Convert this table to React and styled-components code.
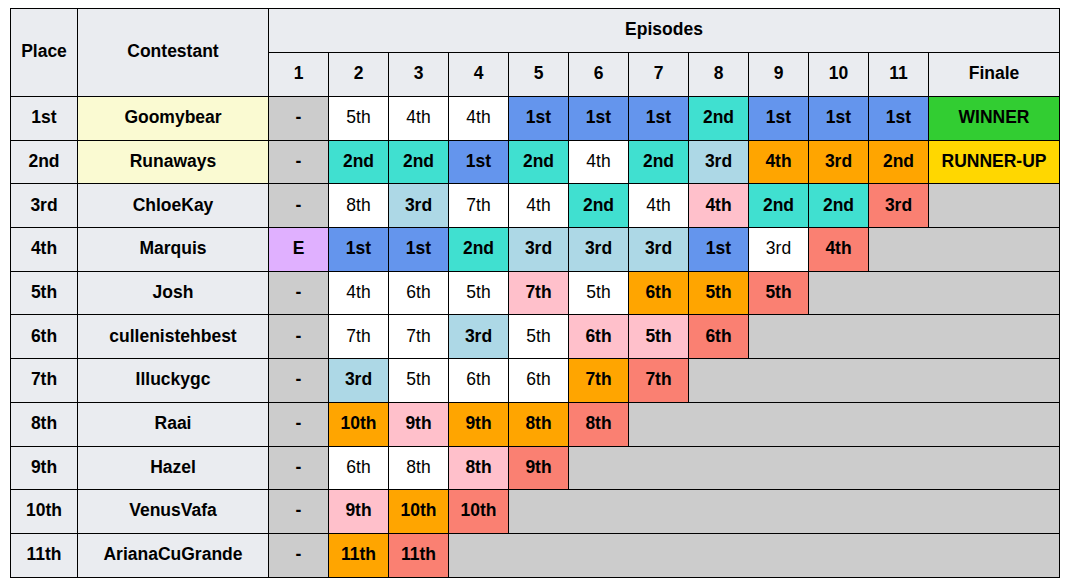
import React from 'react'
import styled, { createGlobalStyle } from 'styled-components'

const GlobalStyle = createGlobalStyle`
  body {
    margin: 0;
    background: #fff;
    font-family: "Liberation Sans", Arial, sans-serif;
  }
`

const COLORS = {
  w: '#ffffff',
  b: '#6495ed',
  t: '#40e0d0',
  l: '#add8e6',
  o: '#ffa500',
  s: '#fa8072',
  p: '#ffc0cb',
  m: '#e0b0ff',
  x: '#cccccc',
}

const rows = [
  { place: '1st', name: 'Goomybear', top: true, ep1: '-', eps: [['5th', 'w'], ['4th', 'w'], ['4th', 'w'], ['1st', 'b'], ['1st', 'b'], ['1st', 'b'], ['2nd', 't'], ['1st', 'b'], ['1st', 'b'], ['1st', 'b']], finale: ['WINNER', '#32cd32'] },
  { place: '2nd', name: 'Runaways', top: true, ep1: '-', eps: [['2nd', 't'], ['2nd', 't'], ['1st', 'b'], ['2nd', 't'], ['4th', 'w'], ['2nd', 't'], ['3rd', 'l'], ['4th', 'o'], ['3rd', 'o'], ['2nd', 'o']], finale: ['RUNNER-UP', '#ffd700'] },
  { place: '3rd', name: 'ChloeKay', ep1: '-', eps: [['8th', 'w'], ['3rd', 'l'], ['7th', 'w'], ['4th', 'w'], ['2nd', 't'], ['4th', 'w'], ['4th', 'p'], ['2nd', 't'], ['2nd', 't'], ['3rd', 's']] },
  { place: '4th', name: 'Marquis', ep1: 'E', eps: [['1st', 'b'], ['1st', 'b'], ['2nd', 't'], ['3rd', 'l'], ['3rd', 'l'], ['3rd', 'l'], ['1st', 'b'], ['3rd', 'w'], ['4th', 's']] },
  { place: '5th', name: 'Josh', ep1: '-', eps: [['4th', 'w'], ['6th', 'w'], ['5th', 'w'], ['7th', 'p'], ['5th', 'w'], ['6th', 'o'], ['5th', 'o'], ['5th', 's']] },
  { place: '6th', name: 'cullenistehbest', ep1: '-', eps: [['7th', 'w'], ['7th', 'w'], ['3rd', 'l'], ['5th', 'w'], ['6th', 'p'], ['5th', 'p'], ['6th', 's']] },
  { place: '7th', name: 'Illuckygc', ep1: '-', eps: [['3rd', 'l'], ['5th', 'w'], ['6th', 'w'], ['6th', 'w'], ['7th', 'o'], ['7th', 's']] },
  { place: '8th', name: 'Raai', ep1: '-', eps: [['10th', 'o'], ['9th', 'p'], ['9th', 'o'], ['8th', 'o'], ['8th', 's']] },
  { place: '9th', name: 'Hazel', ep1: '-', eps: [['6th', 'w'], ['8th', 'w'], ['8th', 'p'], ['9th', 's']] },
  { place: '10th', name: 'VenusVafa', ep1: '-', eps: [['9th', 'p'], ['10th', 'o'], ['10th', 's']] },
  { place: '11th', name: 'ArianaCuGrande', ep1: '-', eps: [['11th', 'o'], ['11th', 's']] },
]

const Page = () => (
  <Wrapper>
    <GlobalStyle />
    <Table>
      <colgroup>
        <col style={{ width: 67 }} />
        <col style={{ width: 191 }} />
        {Array.from({ length: 11 }).map((_, i) => <col key={i} style={{ width: 60 }} />)}
        <col style={{ width: 131 }} />
      </colgroup>
      <thead>
        <tr>
          <Head rowSpan={2}>Place</Head>
          <Head rowSpan={2}>Contestant</Head>
          <Head colSpan={12}>Episodes</Head>
        </tr>
        <tr>
          {Array.from({ length: 11 }).map((_, i) => <Head key={i}>{i + 1}</Head>)}
          <Head>Finale</Head>
        </tr>
      </thead>
      <tbody>
        {rows.map((r) => {
          const filler = 11 - r.eps.length - (r.finale ? 1 : 0)
          return (
            <tr key={r.place}>
              <Head>{r.place}</Head>
              <Head $bg={r.top ? '#fafad2' : undefined}>{r.name}</Head>
              <Cell $bg={r.ep1 === 'E' ? COLORS.m : COLORS.x} $bold>{r.ep1}</Cell>
              {r.eps.map(([txt, c], i) => (
                <Cell key={i} $bg={COLORS[c]} $bold={c !== 'w'}>{txt}</Cell>
              ))}
              {r.finale && <Cell $bg={r.finale[1]} $bold>{r.finale[0]}</Cell>}
              {filler > 0 && <Cell colSpan={filler} $bg={COLORS.x} />}
            </tr>
          )
        })}
      </tbody>
    </Table>
  </Wrapper>
)

const Wrapper = styled.div`
  padding: 8px 0 0 10px;
`

const Table = styled.table`
  border-collapse: collapse;
  table-layout: fixed;
  width: 1050px;
  color: #000;
  font-size: 17.5px;
  line-height: 1.15;

  thead tr {
    height: 44px;
  }

  tbody tr {
    height: 43.7px;
  }
`

const Head = styled.th`
  border: 1px solid #000;
  background: ${(p) => p.$bg || '#eaecf0'};
  font-weight: 700;
  text-align: center;
  padding: 0 4px 2px;
  white-space: nowrap;
`

const Cell = styled.td`
  border: 1px solid #000;
  background: ${(p) => p.$bg};
  font-weight: ${(p) => (p.$bold ? 700 : 400)};
  text-align: center;
  padding: 0 4px 2px;
  white-space: nowrap;
`

export default Page
